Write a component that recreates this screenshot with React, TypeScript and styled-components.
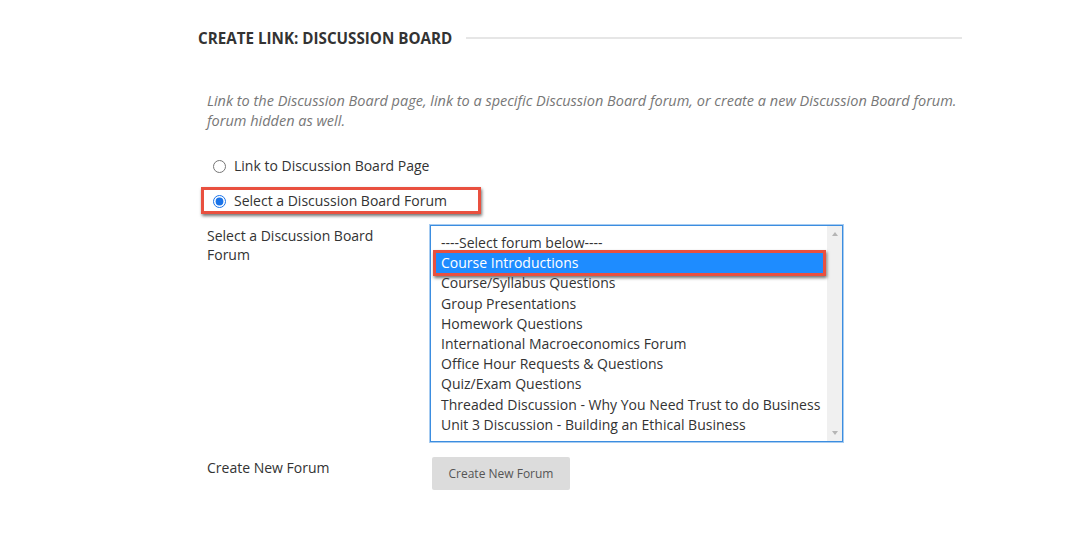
import styled, { createGlobalStyle } from 'styled-components'

const forums = [
  '----Select forum below----',
  'Course Introductions',
  'Course/Syllabus Questions',
  'Group Presentations',
  'Homework Questions',
  'International Macroeconomics Forum',
  'Office Hour Requests & Questions',
  'Quiz/Exam Questions',
  'Threaded Discussion - Why You Need Trust to do Business',
  'Unit 3 Discussion - Building an Ethical Business',
]

const selectedForum = 'Course Introductions'

export default function App() {
  return (
    <>
      <GlobalStyle />
      <Page>
        <Heading>
          <HeadingTitle>Create Link: Discussion Board</HeadingTitle>
          <HeadingRule />
        </Heading>

        <Description>
          Link to the Discussion Board page, link to a specific Discussion Board forum, or create a
          new Discussion Board forum.
          <br />
          forum hidden as well.
        </Description>

        <RadioGroup>
          <RadioRow>
            <Radio type="radio" name="linkType" />
            <RadioLabel>Link to Discussion Board Page</RadioLabel>
          </RadioRow>
          <RadioRow>
            <Radio type="radio" name="linkType" defaultChecked />
            <RadioLabel>Select a Discussion Board Forum</RadioLabel>
            <Callout $inset="-3px auto -3px -6px" $width="280px" />
          </RadioRow>
        </RadioGroup>

        <FormRow $top="14px">
          <FieldLabel>Select a Discussion Board Forum</FieldLabel>
          <ListBox>
            <Options>
              {forums.map((forum) => (
                <Option key={forum} $selected={forum === selectedForum}>
                  {forum}
                  {forum === selectedForum && <Callout $inset="-3px" />}
                </Option>
              ))}
            </Options>
            <ScrollTrack>
              <ScrollArrow $dir="up" />
              <ScrollArrow $dir="down" />
            </ScrollTrack>
          </ListBox>
        </FormRow>

        <FormRow $top="15px">
          <FieldLabel>Create New Forum</FieldLabel>
          <div>
            <GrayButton>Create New Forum</GrayButton>
          </div>
        </FormRow>
      </Page>
    </>
  )
}

const GlobalStyle = createGlobalStyle`
  body {
    margin: 0;
    background: #fff;
    font-family: "Open Sans", "Liberation Sans", sans-serif;
    color: #333;
  }
`

const Page = styled.div`
  width: 764px;
  padding: 28px 0 40px 198px;
`

const Heading = styled.div`
  display: flex;
  align-items: center;
  gap: 14px;
`

const HeadingTitle = styled.h2`
  margin: 0;
  font-size: 15.2px;
  line-height: 20px;
  font-weight: 700;
  text-transform: uppercase;
  color: #333;
  white-space: nowrap;
`

const HeadingRule = styled.div`
  flex: 1;
  height: 2px;
  background: #e6e6e6;
`

const Description = styled.p`
  margin: 43px 0 0 9px;
  font-size: 14.5px;
  line-height: 20px;
  font-style: italic;
  color: #777;
  white-space: nowrap;
`

const RadioGroup = styled.div`
  margin: 24px 0 0 9px;
  display: flex;
  flex-direction: column;
  gap: 14px;
`

const RadioRow = styled.label`
  position: relative;
  display: flex;
  align-items: center;
  height: 21px;
`

const Radio = styled.input`
  width: 13px;
  height: 13px;
  margin: 2px 8px 0 6px;
  accent-color: #1a73e8;
`

const RadioLabel = styled.span`
  font-size: 14px;
  color: #333;
`

const Callout = styled.span<{ $inset?: string; $width?: string }>`
  position: absolute;
  inset: ${(p) => p.$inset ?? '0'};
  ${(p) => (p.$width ? `width: ${p.$width};` : '')}
  border: 3px solid #e9503f;
  box-shadow: 1px 2px 3px rgba(0, 0, 0, 0.55);
  pointer-events: none;
  box-sizing: border-box;
`

const FormRow = styled.div<{ $top?: string }>`
  display: grid;
  grid-template-columns: 223px 1fr;
  margin: ${(p) => p.$top ?? '10px'} 0 0 9px;
`

const FieldLabel = styled.div`
  padding-top: 1px;
  width: 180px;
  font-size: 14px;
  line-height: 19px;
  color: #333;
`

const ListBox = styled.div`
  display: flex;
  width: 413px;
  height: 217px;
  box-sizing: border-box;
  border: 1px solid #3b8de0;
  box-shadow: 0 0 0 1px rgba(59, 141, 224, 0.45);
  background: #fff;
`

const Options = styled.ul`
  flex: 1;
  list-style: none;
  margin: 0;
  padding: 7px 4px 0 5px;
`

const Option = styled.li<{ $selected?: boolean }>`
  position: relative;
  padding-left: 5px;
  font-size: 14px;
  line-height: 20.2px;
  white-space: nowrap;
  color: ${(p) => (p.$selected ? '#fff' : '#333')};
  background: ${(p) => (p.$selected ? '#1e8cff' : 'transparent')};
`

const ScrollTrack = styled.div`
  width: 15px;
  background: #f0f0f0;
  display: flex;
  flex-direction: column;
  justify-content: space-between;
  align-items: center;
  padding: 6px 0;
`

const ScrollArrow = styled.span<{ $dir: 'up' | 'down' }>`
  width: 0;
  height: 0;
  border-left: 3px solid transparent;
  border-right: 3px solid transparent;
  ${(p) =>
    p.$dir === 'up'
      ? 'border-bottom: 4px solid #b5b5b5;'
      : 'border-top: 4px solid #b5b5b5;'}
`

const GrayButton = styled.button`
  margin-left: 2px;
  width: 138px;
  height: 33px;
  border: none;
  border-radius: 2px;
  background: #dcdcdc;
  color: #555;
  font-family: "Open Sans", "Liberation Sans", sans-serif;
  font-size: 12px;
  cursor: pointer;
`
